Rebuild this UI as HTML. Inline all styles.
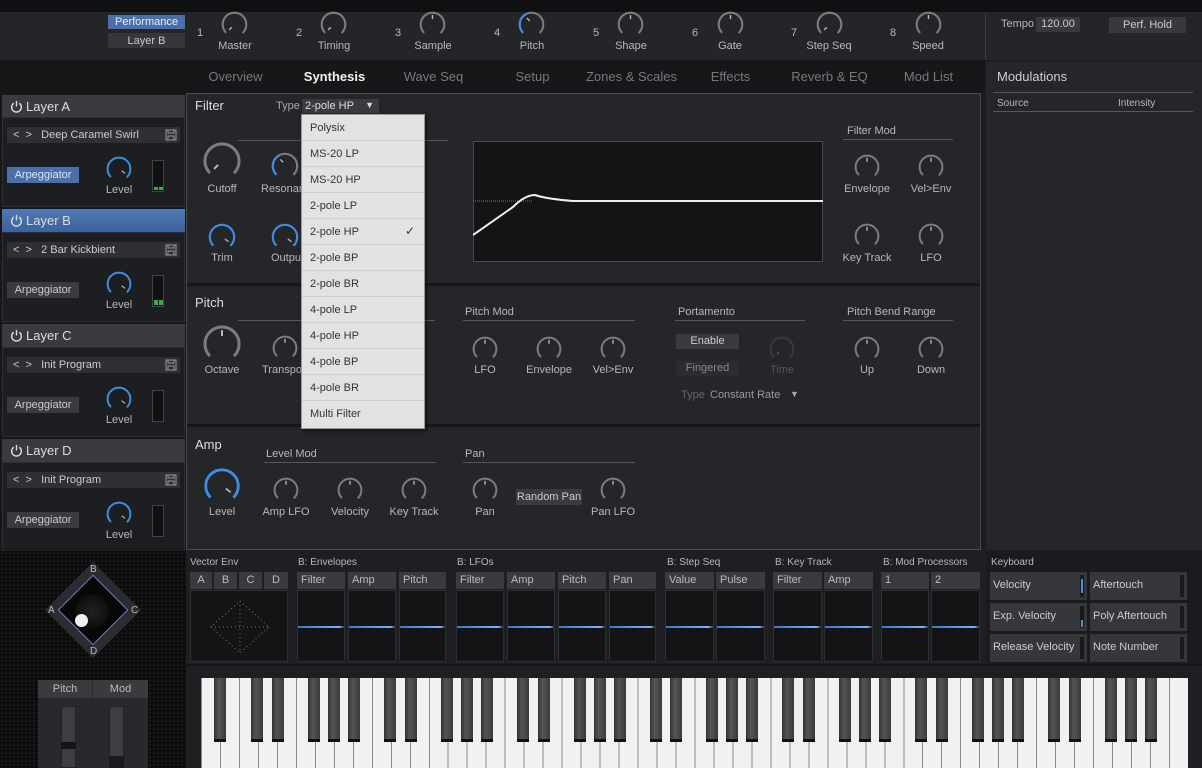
<!DOCTYPE html>
<html><head><meta charset="utf-8"><style>
*{margin:0;padding:0;box-sizing:border-box}
body{width:1202px;height:768px;overflow:hidden;background:#1c1d20;font-family:"Liberation Sans",sans-serif;font-size:11px;color:#b8b8b8;position:relative}
.a{position:absolute}
.t{position:absolute;white-space:nowrap}
.c{transform:translateX(-50%)}
svg.k{position:absolute;overflow:visible}
.btn{position:absolute;background:#3a3b3f;color:#ccc;text-align:center;font-size:11px}
.hl{position:absolute;height:1px;background:#55565a}
.tab{position:absolute;top:69px;width:99px;text-align:center;font-size:13px;color:#77787c}
.lh{position:absolute;left:2px;width:183px;height:23px;background:#3a3b3f;color:#ddd;font-size:13px;padding:4px 0 0 24px}
.lb{position:absolute;left:2px;width:183px;height:90px;background:#1d1e21;border:1px solid #2e2f33}
.pw{position:absolute;left:8px;top:5px;width:13px;height:13px}
.bar{position:absolute;left:7px;width:173px;height:16px;background:#2f3034;color:#ccc;padding:2px 0 0 6px}
.mt{position:absolute;left:152px;width:12px;height:32px;background:#111;border:1px solid #444}
.mt i{position:absolute;bottom:1px;width:4px;height:3px;background:#2fb14a}
.bt{position:absolute;top:572px;height:17px;background:#3a3b3f;color:#bbb;padding:2px 0 0 4px}
.bx{position:absolute;top:590px;height:72px;background:#141417;border:1px solid #2e2f33}
.bx i{position:absolute;left:0;right:0;top:35px;height:2px;background:linear-gradient(90deg,#3a78c8,#7fb0ff 90%,#333)}
.kc{position:absolute;width:97px;height:28px;background:#36373b;color:#ccc;padding:7px 0 0 3px}
.kc b{position:absolute;right:3px;top:3px;width:4px;height:22px;background:#1a1a1d}
.dd{position:absolute;left:301px;top:114px;width:124px;height:315px;background:#e2e2e2;border:1px solid #999;box-shadow:2px 2px 4px rgba(0,0,0,.5)}
.dd div{height:26px;color:#333;font-size:11px;padding:7px 0 0 8px;border-bottom:1px solid #cfcfcf;position:relative}
.oct{position:absolute;top:0;height:64px}
.oct i{position:absolute;top:0;width:12px;height:64px;background:linear-gradient(90deg,#333,#555 40%,#3a3a3a);border-bottom:3px solid #111}
</style></head><body>
<svg width="0" height="0" style="position:absolute">
<defs>
<g id="kg"><circle cx="16" cy="16" r="13" fill="none" stroke="#7c7c7e" stroke-width="2.3" stroke-dasharray="61.26 100" transform="rotate(135 16 16)"/><line x1="16" y1="5.5" x2="16" y2="10" stroke="#bbb" stroke-width="1.5"/></g>
<g id="km"><circle cx="16" cy="16" r="13" fill="none" stroke="#7c7c7e" stroke-width="2.3" stroke-dasharray="61.26 100" transform="rotate(135 16 16)"/><line x1="10" y1="22" x2="13" y2="19" stroke="#bbb" stroke-width="1.5"/></g>
<g id="kd"><circle cx="16" cy="16" r="13" fill="none" stroke="#3a3b3e" stroke-width="2.3" stroke-dasharray="61.26 100" transform="rotate(135 16 16)"/><line x1="10" y1="22" x2="13" y2="19" stroke="#555" stroke-width="1.5"/></g>
<g id="kb"><circle cx="16" cy="16" r="13" fill="none" stroke="#3d8de0" stroke-width="2.3" stroke-dasharray="61.26 100" transform="rotate(135 16 16)"/><line x1="19" y1="18" x2="23" y2="21" stroke="#aaa" stroke-width="1.5"/></g>
<g id="kp"><circle cx="16" cy="16" r="13" fill="none" stroke="#7c7c7e" stroke-width="2.3" stroke-dasharray="61.26 100" transform="rotate(135 16 16)"/><circle cx="16" cy="16" r="13" fill="none" stroke="#3d8de0" stroke-width="2.3" stroke-dasharray="24 100" transform="rotate(135 16 16)"/><line x1="11" y1="9" x2="14" y2="12" stroke="#bbb" stroke-width="1.5"/></g>
<g id="pw"><path d="M4 3.5A5.2 5.2 0 1 0 10 3.5" fill="none" stroke="#ddd" stroke-width="1.5"/><line x1="7" y1="1" x2="7" y2="7" stroke="#ddd" stroke-width="1.5"/></g>
<g id="sv"><rect x="1" y="1" width="10" height="10" fill="none" stroke="#999"/><rect x="3" y="1" width="6" height="3" fill="none" stroke="#999"/><rect x="3" y="7" width="6" height="4" fill="none" stroke="#999"/></g>
</defs></svg>

<!-- top bar -->
<div class="a" style="left:0;top:0;width:1202px;height:12px;background:#0f1011"></div>
<div class="a" style="left:0;top:12px;width:1202px;height:48px;background:#242528"></div>
<div class="btn" style="left:108px;top:15px;width:77px;height:14px;background:#4a70ab;color:#e8eef8;padding-top:1px">Performance</div>
<div class="btn" style="left:108px;top:33px;width:77px;height:15px;background:#36373b;padding-top:2px">Layer B</div>
<div class="t" style="left:197px;top:27px">1</div><svg class="k" viewBox="0 0 32 32" style="left:220px;top:10px" width="29" height="29"><use href="#km"/></svg><div class="t c" style="left:235px;top:40px">Master</div>
<div class="t" style="left:296px;top:27px">2</div><svg class="k" viewBox="0 0 32 32" style="left:319px;top:10px" width="29" height="29"><use href="#km"/></svg><div class="t c" style="left:334px;top:40px">Timing</div>
<div class="t" style="left:395px;top:27px">3</div><svg class="k" viewBox="0 0 32 32" style="left:418px;top:10px" width="29" height="29"><use href="#kg"/></svg><div class="t c" style="left:433px;top:40px">Sample</div>
<div class="t" style="left:494px;top:27px">4</div><svg class="k" viewBox="0 0 32 32" style="left:517px;top:10px" width="29" height="29"><use href="#kp"/></svg><div class="t c" style="left:532px;top:40px">Pitch</div>
<div class="t" style="left:593px;top:27px">5</div><svg class="k" viewBox="0 0 32 32" style="left:616px;top:10px" width="29" height="29"><use href="#kg"/></svg><div class="t c" style="left:631px;top:40px">Shape</div>
<div class="t" style="left:692px;top:27px">6</div><svg class="k" viewBox="0 0 32 32" style="left:716px;top:10px" width="29" height="29"><use href="#kg"/></svg><div class="t c" style="left:730px;top:40px">Gate</div>
<div class="t" style="left:791px;top:27px">7</div><svg class="k" viewBox="0 0 32 32" style="left:815px;top:10px" width="29" height="29"><use href="#km"/></svg><div class="t c" style="left:829px;top:40px">Step Seq</div>
<div class="t" style="left:890px;top:27px">8</div><svg class="k" viewBox="0 0 32 32" style="left:914px;top:10px" width="29" height="29"><use href="#kg"/></svg><div class="t c" style="left:928px;top:40px">Speed</div>
<div class="a" style="left:985px;top:13px;width:1px;height:47px;background:#3d3e42"></div>
<div class="t" style="left:1001px;top:18px">Tempo</div>
<div class="btn" style="left:1036px;top:17px;width:44px;height:15px;background:#38393d;padding-top:1px">120.00</div>
<div class="btn" style="left:1109px;top:17px;width:77px;height:16px;background:#38393d;padding-top:2px">Perf. Hold</div>

<!-- tabs -->
<div class="a" style="left:0;top:60px;width:985px;height:33px;background:#161719"></div>
<div class="tab" style="left:186px">Overview</div>
<div class="tab" style="left:285px;color:#f2f2f2;font-weight:bold">Synthesis</div>
<div class="tab" style="left:384px">Wave Seq</div>
<div class="tab" style="left:483px">Setup</div>
<div class="tab" style="left:582px">Zones &amp; Scales</div>
<div class="tab" style="left:681px">Effects</div>
<div class="tab" style="left:780px">Reverb &amp; EQ</div>
<div class="tab" style="left:879px">Mod List</div>

<!-- modulations -->
<div class="a" style="left:986px;top:62px;width:216px;height:488px;background:#25262a"></div>
<div class="t" style="left:997px;top:69px;font-size:13px;color:#cfcfcf">Modulations</div>
<div class="hl" style="left:993px;top:92px;width:200px"></div>
<div class="t" style="left:997px;top:98px;font-size:10px">Source</div>
<div class="t" style="left:1118px;top:98px;font-size:10px">Intensity</div>
<div class="hl" style="left:993px;top:111px;width:200px"></div>

<!-- main -->
<div class="a" style="left:186px;top:93px;width:795px;height:457px;background:#25262a;border:1px solid #4a4b4f"></div>
<div class="a" style="left:187px;top:283px;width:793px;height:3px;background:#161719"></div>
<div class="a" style="left:187px;top:424px;width:793px;height:3px;background:#161719"></div>

<!-- filter -->
<div class="t" style="left:195px;top:98px;font-size:13px;color:#ddd">Filter</div>
<div class="t" style="left:276px;top:100px;color:#aaa">Type</div>
<div class="a" style="left:302px;top:99px;width:77px;height:14px;background:#3a3b3f;color:#ddd;padding:1px 0 0 3px">2-pole HP<span style="position:absolute;right:5px;font-size:9px">▼</span></div>
<div class="hl" style="left:238px;top:140px;width:210px"></div>
<svg class="k" viewBox="0 0 32 32" style="left:201px;top:140px" width="42" height="42"><use href="#km"/></svg><div class="t c" style="left:222px;top:183px">Cutoff</div>
<svg class="k" viewBox="0 0 32 32" style="left:270px;top:151px" width="30" height="30"><use href="#kp"/></svg><div class="t" style="left:261px;top:183px">Resonan</div>
<svg class="k" viewBox="0 0 32 32" style="left:207px;top:222px" width="30" height="30"><use href="#kb"/></svg><div class="t c" style="left:222px;top:252px">Trim</div>
<svg class="k" viewBox="0 0 32 32" style="left:270px;top:222px" width="30" height="30"><use href="#kb"/></svg><div class="t" style="left:271px;top:252px">Output</div>
<div class="a" style="left:473px;top:141px;width:350px;height:121px;background:#141417;border:1px solid #48494d"></div>
<svg class="a" style="left:473px;top:141px" width="350" height="121"><line x1="0" y1="60" x2="60" y2="60" stroke="#777" stroke-dasharray="1 1"/><path d="M0 94 L40 66 Q52 54 62 54 Q74 58 100 60 L350 60" fill="none" stroke="#eee" stroke-width="2"/></svg>
<div class="t" style="left:847px;top:125px">Filter Mod</div><div class="hl" style="left:843px;top:139px;width:110px"></div>
<svg class="k" viewBox="0 0 32 32" style="left:853px;top:153px" width="28" height="28"><use href="#kg"/></svg><div class="t c" style="left:867px;top:183px">Envelope</div>
<svg class="k" viewBox="0 0 32 32" style="left:917px;top:153px" width="28" height="28"><use href="#kg"/></svg><div class="t c" style="left:931px;top:183px">Vel&gt;Env</div>
<svg class="k" viewBox="0 0 32 32" style="left:853px;top:222px" width="28" height="28"><use href="#kg"/></svg><div class="t c" style="left:867px;top:252px">Key Track</div>
<svg class="k" viewBox="0 0 32 32" style="left:917px;top:222px" width="28" height="28"><use href="#kg"/></svg><div class="t c" style="left:931px;top:252px">LFO</div>

<!-- pitch -->
<div class="t" style="left:195px;top:295px;font-size:13px;color:#ddd">Pitch</div>
<div class="hl" style="left:238px;top:320px;width:197px"></div>
<svg class="k" viewBox="0 0 32 32" style="left:201px;top:323px" width="42" height="42"><use href="#kg"/></svg><div class="t c" style="left:222px;top:364px">Octave</div>
<svg class="k" viewBox="0 0 32 32" style="left:271px;top:334px" width="28" height="28"><use href="#kg"/></svg><div class="t" style="left:262px;top:364px">Transpos</div>
<div class="t" style="left:465px;top:306px">Pitch Mod</div><div class="hl" style="left:463px;top:320px;width:172px"></div>
<svg class="k" viewBox="0 0 32 32" style="left:471px;top:335px" width="28" height="28"><use href="#kg"/></svg><div class="t c" style="left:485px;top:364px">LFO</div>
<svg class="k" viewBox="0 0 32 32" style="left:535px;top:335px" width="28" height="28"><use href="#kg"/></svg><div class="t c" style="left:549px;top:364px">Envelope</div>
<svg class="k" viewBox="0 0 32 32" style="left:599px;top:335px" width="28" height="28"><use href="#kg"/></svg><div class="t c" style="left:613px;top:364px">Vel&gt;Env</div>
<div class="t" style="left:678px;top:306px">Portamento</div><div class="hl" style="left:675px;top:320px;width:130px"></div>
<div class="btn" style="left:676px;top:334px;width:63px;height:15px;background:#3a3b3f;padding-top:1px">Enable</div>
<div class="btn" style="left:676px;top:361px;width:63px;height:15px;background:#2b2c30;color:#888;padding-top:1px">Fingered</div>
<svg class="k" viewBox="0 0 32 32" style="left:768px;top:335px" width="28" height="28"><use href="#kd"/></svg><div class="t c" style="left:782px;top:364px;color:#555">Time</div>
<div class="t" style="left:681px;top:389px;color:#666">Type</div><div class="t" style="left:710px;top:389px;color:#999">Constant Rate</div><div class="t" style="left:790px;top:389px;font-size:9px;color:#aaa">▼</div>
<div class="t" style="left:847px;top:306px">Pitch Bend Range</div><div class="hl" style="left:843px;top:320px;width:110px"></div>
<svg class="k" viewBox="0 0 32 32" style="left:853px;top:335px" width="28" height="28"><use href="#kg"/></svg><div class="t c" style="left:867px;top:364px">Up</div>
<svg class="k" viewBox="0 0 32 32" style="left:917px;top:335px" width="28" height="28"><use href="#kg"/></svg><div class="t c" style="left:931px;top:364px">Down</div>

<!-- amp -->
<div class="t" style="left:195px;top:437px;font-size:13px;color:#ddd">Amp</div>
<svg class="k" viewBox="0 0 32 32" style="left:202px;top:466px" width="40" height="40"><use href="#kb"/></svg><div class="t c" style="left:222px;top:506px">Level</div>
<div class="t" style="left:266px;top:448px">Level Mod</div><div class="hl" style="left:264px;top:462px;width:172px"></div>
<svg class="k" viewBox="0 0 32 32" style="left:272px;top:476px" width="28" height="28"><use href="#kg"/></svg><div class="t c" style="left:286px;top:506px">Amp LFO</div>
<svg class="k" viewBox="0 0 32 32" style="left:336px;top:476px" width="28" height="28"><use href="#kg"/></svg><div class="t c" style="left:350px;top:506px">Velocity</div>
<svg class="k" viewBox="0 0 32 32" style="left:400px;top:476px" width="28" height="28"><use href="#kg"/></svg><div class="t c" style="left:414px;top:506px">Key Track</div>
<div class="t" style="left:465px;top:448px">Pan</div><div class="hl" style="left:463px;top:462px;width:172px"></div>
<svg class="k" viewBox="0 0 32 32" style="left:471px;top:476px" width="28" height="28"><use href="#kg"/></svg><div class="t c" style="left:485px;top:506px">Pan</div>
<div class="btn" style="left:516px;top:489px;width:66px;height:16px;background:#3a3b3f;padding-top:2px">Random Pan</div>
<svg class="k" viewBox="0 0 32 32" style="left:599px;top:476px" width="28" height="28"><use href="#kg"/></svg><div class="t c" style="left:613px;top:506px">Pan LFO</div>

<!-- layers -->
<div class="a" style="left:0;top:93px;width:186px;height:457px;background:#161719"></div>
<div class="lh" style="top:95px"><svg class="pw" viewBox="0 0 14 14"><use href="#pw"/></svg>Layer A</div>
<div class="lb" style="top:117px"></div>
<div class="bar" style="top:127px">&lt;&nbsp;&nbsp;&gt;&nbsp;&nbsp;&nbsp;Deep Caramel Swirl<svg viewBox="0 0 12 12" style="position:absolute;right:3px;top:2px" width="12" height="12"><use href="#sv"/></svg></div>
<div class="btn" style="left:7px;top:167px;width:72px;height:16px;background:#4a70ab;color:#dde6f4;padding-top:2px">Arpeggiator</div>
<svg class="k" viewBox="0 0 32 32" style="left:105px;top:155px" width="28" height="28"><use href="#kb"/></svg><div class="t c" style="left:119px;top:184px">Level</div>
<div class="mt" style="top:160px"><i style="left:1px"></i><i style="left:6px"></i></div>

<div class="lh" style="top:209px;background:linear-gradient(#5078b3,#3d629c)"><svg class="pw" viewBox="0 0 14 14"><use href="#pw"/></svg>Layer B</div>
<div class="lb" style="top:232px"></div>
<div class="bar" style="top:242px">&lt;&nbsp;&nbsp;&gt;&nbsp;&nbsp;&nbsp;2 Bar Kickbient<svg viewBox="0 0 12 12" style="position:absolute;right:3px;top:2px" width="12" height="12"><use href="#sv"/></svg></div>
<div class="btn" style="left:7px;top:282px;width:72px;height:16px;padding-top:2px">Arpeggiator</div>
<svg class="k" viewBox="0 0 32 32" style="left:105px;top:270px" width="28" height="28"><use href="#kb"/></svg><div class="t c" style="left:119px;top:299px">Level</div>
<div class="mt" style="top:275px"><i style="left:1px;height:5px"></i><i style="left:6px;height:5px"></i></div>

<div class="lh" style="top:324px"><svg class="pw" viewBox="0 0 14 14"><use href="#pw"/></svg>Layer C</div>
<div class="lb" style="top:347px"></div>
<div class="bar" style="top:357px">&lt;&nbsp;&nbsp;&gt;&nbsp;&nbsp;&nbsp;Init Program<svg viewBox="0 0 12 12" style="position:absolute;right:3px;top:2px" width="12" height="12"><use href="#sv"/></svg></div>
<div class="btn" style="left:7px;top:397px;width:72px;height:16px;padding-top:2px">Arpeggiator</div>
<svg class="k" viewBox="0 0 32 32" style="left:105px;top:385px" width="28" height="28"><use href="#kb"/></svg><div class="t c" style="left:119px;top:414px">Level</div>
<div class="mt" style="top:390px"></div>

<div class="lh" style="top:439px"><svg class="pw" viewBox="0 0 14 14"><use href="#pw"/></svg>Layer D</div>
<div class="lb" style="top:462px"></div>
<div class="bar" style="top:472px">&lt;&nbsp;&nbsp;&gt;&nbsp;&nbsp;&nbsp;Init Program<svg viewBox="0 0 12 12" style="position:absolute;right:3px;top:2px" width="12" height="12"><use href="#sv"/></svg></div>
<div class="btn" style="left:7px;top:512px;width:72px;height:16px;padding-top:2px">Arpeggiator</div>
<svg class="k" viewBox="0 0 32 32" style="left:105px;top:500px" width="28" height="28"><use href="#kb"/></svg><div class="t c" style="left:119px;top:529px">Level</div>
<div class="mt" style="top:505px"></div>

<!-- bottom -->
<div class="a" style="left:0;top:550px;width:1202px;height:218px;background:#1e1f22"></div>
<div class="a" style="left:0;top:551px;width:186px;height:217px;background:#0c0c0d;background-image:radial-gradient(#1c1c1e 1px,transparent 1.2px);background-size:4px 4px"></div>
<div class="a" style="left:59px;top:576px;width:68px;height:68px;background:#2b2c30;transform:rotate(45deg)"></div>
<div class="a" style="left:68px;top:585px;width:50px;height:50px;border:1.5px solid #6c86c0;background:#070708;transform:rotate(45deg)"></div>
<div class="a" style="left:75px;top:594px;width:34px;height:34px;border-radius:50%;background:radial-gradient(#222,#050505)"></div>
<div class="a" style="left:75px;top:614px;width:13px;height:13px;border-radius:50%;background:#f0f0f0"></div>
<div class="t" style="left:48px;top:605px;font-size:10px">A</div>
<div class="t" style="left:90px;top:564px;font-size:10px">B</div>
<div class="t" style="left:131px;top:605px;font-size:10px">C</div>
<div class="t" style="left:90px;top:646px;font-size:10px">D</div>
<div class="a" style="left:38px;top:680px;width:110px;height:88px;background:#29292d"></div>
<div class="a" style="left:38px;top:680px;width:54px;height:18px;background:#3a3b3f;color:#bbb;text-align:center;padding-top:3px">Pitch</div>
<div class="a" style="left:93px;top:680px;width:55px;height:18px;background:#3a3b3f;color:#bbb;text-align:center;padding-top:3px">Mod</div>
<div class="a" style="left:61px;top:706px;width:15px;height:62px;background:#3d3e42;border:1px solid #222"></div>
<div class="a" style="left:61px;top:742px;width:15px;height:7px;background:#151517"></div>
<div class="a" style="left:109px;top:706px;width:15px;height:62px;background:#3d3e42;border:1px solid #222"></div>
<div class="a" style="left:109px;top:756px;width:15px;height:12px;background:#1a1a1c"></div>

<div class="t" style="left:190px;top:557px;font-size:10px">Vector Env</div>
<div class="bt" style="left:190px;width:22px;text-align:center;padding-left:0">A</div>
<div class="bt" style="left:214px;width:23px;text-align:center;padding-left:0">B</div>
<div class="bt" style="left:239px;width:23px;text-align:center;padding-left:0">C</div>
<div class="bt" style="left:264px;width:24px;text-align:center;padding-left:0">D</div>
<div class="bx" style="left:190px;width:98px"><svg width="98" height="72"><path d="M49 10 L78 36 L49 62 L20 36 Z M49 10 V62 M20 36 H78" fill="none" stroke="#777" stroke-dasharray="1 3"/></svg></div>

<div class="t" style="left:298px;top:557px;font-size:10px">B: Envelopes</div>
<div class="bt" style="left:297px;width:48px">Filter</div><div class="bt" style="left:348px;width:48px">Amp</div><div class="bt" style="left:399px;width:47px">Pitch</div>
<div class="bx" style="left:297px;width:48px"><i></i></div><div class="bx" style="left:348px;width:48px"><i></i></div><div class="bx" style="left:399px;width:47px"><i></i></div>

<div class="t" style="left:457px;top:557px;font-size:10px">B: LFOs</div>
<div class="bt" style="left:456px;width:48px">Filter</div><div class="bt" style="left:507px;width:48px">Amp</div><div class="bt" style="left:558px;width:48px">Pitch</div><div class="bt" style="left:609px;width:47px">Pan</div>
<div class="bx" style="left:456px;width:48px"><i></i></div><div class="bx" style="left:507px;width:48px"><i></i></div><div class="bx" style="left:558px;width:48px"><i></i></div><div class="bx" style="left:609px;width:47px"><i></i></div>

<div class="t" style="left:667px;top:557px;font-size:10px">B: Step Seq</div>
<div class="bt" style="left:665px;width:49px">Value</div><div class="bt" style="left:716px;width:49px">Pulse</div>
<div class="bx" style="left:665px;width:49px"><i></i></div><div class="bx" style="left:716px;width:49px"><i></i></div>

<div class="t" style="left:775px;top:557px;font-size:10px">B: Key Track</div>
<div class="bt" style="left:773px;width:49px">Filter</div><div class="bt" style="left:824px;width:49px">Amp</div>
<div class="bx" style="left:773px;width:49px"><i></i></div><div class="bx" style="left:824px;width:49px"><i></i></div>

<div class="t" style="left:883px;top:557px;font-size:10px">B: Mod Processors</div>
<div class="bt" style="left:881px;width:48px">1</div><div class="bt" style="left:931px;width:49px">2</div>
<div class="bx" style="left:881px;width:48px"><i></i></div><div class="bx" style="left:931px;width:49px"><i></i></div>

<div class="a" style="left:986px;top:551px;width:216px;height:115px;background:#1a1b1e"></div>
<div class="t" style="left:991px;top:557px;font-size:10px">Keyboard</div>
<div class="kc" style="left:990px;top:572px">Velocity<b><i style="position:absolute;left:1px;top:4px;width:2px;height:14px;background:#4f8fd8"></i></b></div>
<div class="kc" style="left:1090px;top:572px">Aftertouch<b></b></div>
<div class="kc" style="left:990px;top:603px">Exp. Velocity<b><i style="position:absolute;left:1px;top:14px;width:2px;height:7px;background:#4f8fd8"></i></b></div>
<div class="kc" style="left:1090px;top:603px">Poly Aftertouch<b></b></div>
<div class="kc" style="left:990px;top:634px">Release Velocity<b></b></div>
<div class="kc" style="left:1090px;top:634px">Note Number<b></b></div>

<!-- keyboard -->
<div class="a" style="left:186px;top:664px;width:1016px;height:104px;background:#1e1f22;border-top:2px solid #141416"></div>
<div class="a" style="left:201px;top:678px;width:987px;height:90px;background:repeating-linear-gradient(90deg,#8a8a8a 0,#8a8a8a 1px,#f1f1f1 1px,#f1f1f1 18.98px)">
<div class="oct" style="left:0;width:37.96px"><i style="left:calc(50% - 6px)"></i></div>
<div class="oct" style="left:37.96px;width:132.86px"><i style="left:calc(14.286% - 7px)"></i><i style="left:calc(28.571% - 5px)"></i><i style="left:calc(57.143% - 7px)"></i><i style="left:calc(71.429% - 6px)"></i><i style="left:calc(85.714% - 5px)"></i></div>
<div class="oct" style="left:170.82px;width:132.86px"><i style="left:calc(14.286% - 7px)"></i><i style="left:calc(28.571% - 5px)"></i><i style="left:calc(57.143% - 7px)"></i><i style="left:calc(71.429% - 6px)"></i><i style="left:calc(85.714% - 5px)"></i></div>
<div class="oct" style="left:303.68px;width:132.86px"><i style="left:calc(14.286% - 7px)"></i><i style="left:calc(28.571% - 5px)"></i><i style="left:calc(57.143% - 7px)"></i><i style="left:calc(71.429% - 6px)"></i><i style="left:calc(85.714% - 5px)"></i></div>
<div class="oct" style="left:436.54px;width:132.86px"><i style="left:calc(14.286% - 7px)"></i><i style="left:calc(28.571% - 5px)"></i><i style="left:calc(57.143% - 7px)"></i><i style="left:calc(71.429% - 6px)"></i><i style="left:calc(85.714% - 5px)"></i></div>
<div class="oct" style="left:569.4px;width:132.86px"><i style="left:calc(14.286% - 7px)"></i><i style="left:calc(28.571% - 5px)"></i><i style="left:calc(57.143% - 7px)"></i><i style="left:calc(71.429% - 6px)"></i><i style="left:calc(85.714% - 5px)"></i></div>
<div class="oct" style="left:702.26px;width:132.86px"><i style="left:calc(14.286% - 7px)"></i><i style="left:calc(28.571% - 5px)"></i><i style="left:calc(57.143% - 7px)"></i><i style="left:calc(71.429% - 6px)"></i><i style="left:calc(85.714% - 5px)"></i></div>
<div class="oct" style="left:835.12px;width:132.86px"><i style="left:calc(14.286% - 7px)"></i><i style="left:calc(28.571% - 5px)"></i><i style="left:calc(57.143% - 7px)"></i><i style="left:calc(71.429% - 6px)"></i><i style="left:calc(85.714% - 5px)"></i></div>
</div>

<!-- dropdown -->
<div class="dd">
<div>Polysix</div><div>MS-20 LP</div><div>MS-20 HP</div><div>2-pole LP</div>
<div>2-pole HP<span style="position:absolute;right:9px;top:5px;font-size:12px">✓</span></div>
<div>2-pole BP</div><div>2-pole BR</div><div>4-pole LP</div><div>4-pole HP</div><div>4-pole BP</div><div>4-pole BR</div><div style="border:0">Multi Filter</div>
</div>
</body></html>
